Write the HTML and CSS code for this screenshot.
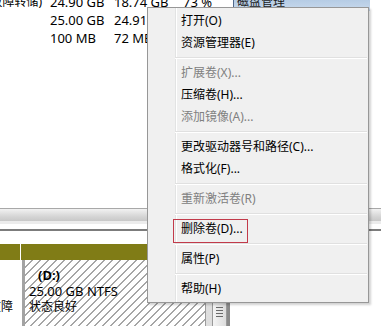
FILE: index.html
```html
<!DOCTYPE html>
<html>
<head>
<meta charset="utf-8">
<link rel="stylesheet" href="styles.css">
</head>
<body>
<div class="screen">
  <div class="list">
    <div class="row">
      <div class="c c1"><span>(系统, 启动, 页面文件, 活动, 故障转储)</span></div>
      <div class="c c2">24.90 GB</div>
      <div class="c c3">18.74 GB</div>
      <div class="c c4">73 %</div>
      <div class="c c5 sel">磁盘管理</div>
    </div>
    <div class="row">
      <div class="c c1"></div>
      <div class="c c2">25.00 GB</div>
      <div class="c c3">24.91 GB</div>
      <div class="c c4">100 %</div>
      <div class="c c5"></div>
    </div>
    <div class="row">
      <div class="c c1"></div>
      <div class="c c2">100 MB</div>
      <div class="c c3">72 MB</div>
      <div class="c c4">72 %</div>
      <div class="c c5"></div>
    </div>
  </div>

  <div class="hbar">
    <div class="track"></div>
    <div class="track-low"></div>
    <div class="rule"></div>
  </div>

  <div class="diskmap">
    <div class="dleft">
      <div class="head"></div>
      <div class="lbody"><span>故障</span></div>
    </div>
    <div class="part">
      <div class="head"></div>
      <div class="pbody">
        <div class="hatch">
          <div class="drive">(D:)</div>
          <div>25.00 GB NTFS</div>
          <div class="status">状态良好</div>
        </div>
        <div class="pedge"></div>
      </div>
    </div>
    <div class="vscroll">
      <div class="thumb"><div class="grip"><i></i><i></i><i></i><i></i></div></div>
    </div>
    <div class="vline"></div>
  </div>

  <div class="menu">
    <div class="item">打开(O)</div>
    <div class="item">资源管理器(E)</div>
    <div class="sep"></div>
    <div class="item dis">扩展卷(X)...</div>
    <div class="item">压缩卷(H)...</div>
    <div class="item dis">添加镜像(A)...</div>
    <div class="sep"></div>
    <div class="item">更改驱动器号和路径(C)...</div>
    <div class="item">格式化(F)...</div>
    <div class="sep"></div>
    <div class="item dis">重新激活卷(R)</div>
    <div class="sep"></div>
    <div class="item">删除卷(D)...<span class="box"></span></div>
    <div class="sep"></div>
    <div class="item">属性(P)</div>
    <div class="sep"></div>
    <div class="item">帮助(H)</div>
  </div>
</div>
</body>
</html>
```

FILE: styles.css
```css
html, body {
  margin: 0;
  padding: 0;
  background: #fff;
}
body {
  width: 381px;
  height: 326px;
  overflow: hidden;
  font-family: "Noto Sans", "Noto Sans CJK SC", sans-serif;
  color: #000;
}
.screen {
  position: relative;
  width: 381px;
  height: 326px;
  overflow: hidden;
}

/* volume list */
.list {
  margin-top: -7px;
  height: 215px;
  font-size: 13px;
}
.row {
  display: grid;
  grid-template-columns: 50px 64px 69px 50px 137px 1fr;
  height: 18px;
  line-height: 18px;
  white-space: nowrap;
}
.c {
  overflow: hidden;
}
.c1 {
  display: flex;
  justify-content: flex-end;
  padding-right: 8px;
  font-size: 12px;
}
.c1 span {
  flex: none;
}
.sel {
  background: linear-gradient(#a9c3df, #c9daed);
  border-left: 1px solid #50688a;
  padding-left: 3px;
  font-size: 12px;
  color: #1a1a1a;
}

/* horizontal bar */
.hbar {
  height: 36px;
  display: flex;
  flex-direction: column;
}
.track {
  height: 12px;
  border-top: 1px solid #a8a8a8;
  background: linear-gradient(#f2f2f2, #d6d6d6 60%, #c8c8c8);
}
.track-low {
  height: 3px;
  background: #ececec;
}
.rule {
  margin-top: 5px;
  height: 2px;
  background: #7c7c7c;
}

/* disk map */
.diskmap {
  display: flex;
  height: 82px;
  font-size: 13px;
  line-height: 16px;
}
.head {
  height: 16px;
  background: #807c16;
}
.dleft {
  width: 20px;
}
.lbody {
  display: flex;
  justify-content: flex-end;
  overflow: hidden;
  padding: 39px 7px 0 0;
  font-size: 12px;
  white-space: nowrap;
}
.lbody span {
  flex: none;
}
.part {
  width: 191px;
  margin-left: 1px;
  display: flex;
  flex-direction: column;
}
.pbody {
  flex: 1;
  display: flex;
  padding-left: 1px;
}
.hatch {
  flex: 1;
  border-left: 3px solid #a3a3a3;
  padding: 7px 0 0 4px;
  background: repeating-linear-gradient(135deg, #fff 0, #fff 4.6px, #a6a6a6 4.6px, #a6a6a6 5.66px);
  white-space: nowrap;
}
.drive {
  font-weight: bold;
  padding-left: 9px;
}
.status {
  font-size: 12px;
}
.pedge {
  width: 6px;
  border-left: 1px solid #9c9c9c;
  background: #dedede;
}
.vscroll {
  width: 15px;
  background: #e9e9e9;
}
.thumb {
  margin-top: 40px;
  height: 60px;
  border: 1px solid #9a9a9a;
  border-radius: 2px;
  background: linear-gradient(90deg, #f4f4f4, #dcdcdc);
  padding-top: 22px;
  box-sizing: border-box;
}
.grip {
  display: flex;
  flex-direction: column;
  align-items: center;
  gap: 2px;
}
.grip i {
  display: block;
  width: 7px;
  height: 1px;
  background: #6a6a6a;
}
.vline {
  width: 3px;
  background: #8a8a8a;
}

/* context menu */
.menu {
  position: absolute;
  left: 147px;
  top: 7px;
  width: 222px;
  box-sizing: border-box;
  border: 1px solid #979797;
  padding: 2px 0;
  background-color: #f0f0f0;
  background-image: linear-gradient(to right, transparent 27px, #e2e3e3 27px, #e2e3e3 28px, #fff 28px, #fff 29px, transparent 29px);
  box-shadow: 2px 2px 2px rgba(0, 0, 0, 0.18);
  font-size: 12px;
}
.item {
  position: relative;
  height: 22px;
  line-height: 22px;
  padding-left: 33px;
  white-space: nowrap;
}
.item.dis {
  color: #808080;
}
.sep {
  margin: 3px 1px 3px 27px;
  height: 0;
  border-top: 1px solid #e0e0e0;
  border-bottom: 1px solid #fff;
}
.box {
  position: absolute;
  left: 25px;
  top: 1px;
  width: 75px;
  height: 24px;
  box-sizing: border-box;
  border: 1px solid #c23a4a;
}
```
